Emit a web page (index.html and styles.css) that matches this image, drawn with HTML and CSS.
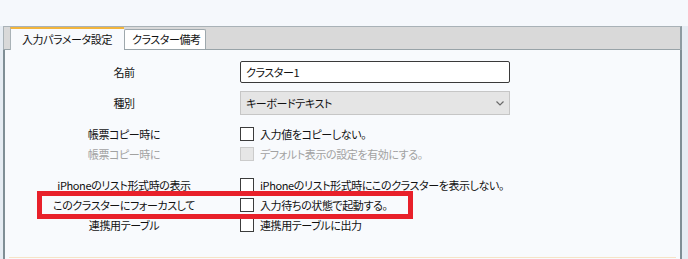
FILE: index.html
```html
<!DOCTYPE html>
<html lang="ja">
<head>
<meta charset="utf-8">
<link rel="stylesheet" href="styles.css">
</head>
<body>
<div class="window">
  <div class="tabstrip">
    <div class="tab tab-active">入力パラメータ設定</div>
    <div class="tab tab-normal">クラスター備考</div>
  </div>
  <div class="panel">
    <div class="form">
      <div class="row row-name">
        <div class="label">名前</div>
        <div class="control"><div class="input">クラスター1</div></div>
      </div>
      <div class="row row-select">
        <div class="label">種別</div>
        <div class="control">
          <div class="select">
            <span>キーボードテキスト</span>
            <svg class="chev" width="8" height="5" viewBox="0 0 8 5"><path d="M0.5 0.5 L4 4 L7.5 0.5" fill="none" stroke="#6a6a6a" stroke-width="1.2"/></svg>
          </div>
        </div>
      </div>
      <div class="row row-check row-first">
        <div class="label">帳票コピー時に</div>
        <div class="control"><span class="cb"></span><span class="cbtext">入力値をコピーしない。</span></div>
      </div>
      <div class="row row-check disabled">
        <div class="label">帳票コピー時に</div>
        <div class="control"><span class="cb"></span><span class="cbtext">デフォルト表示の設定を有効にする。</span></div>
      </div>
      <div class="row row-check row-group">
        <div class="label">iPhoneのリスト形式時の表示</div>
        <div class="control"><span class="cb"></span><span class="cbtext">iPhoneのリスト形式時にこのクラスターを表示しない。</span></div>
      </div>
      <div class="row row-check">
        <div class="label">このクラスターにフォーカスして</div>
        <div class="control"><span class="cb"></span><span class="cbtext">入力待ちの状態で起動する。</span></div>
      </div>
      <div class="row row-check">
        <div class="label">連携用テーブル</div>
        <div class="control"><span class="cb"></span><span class="cbtext">連携用テーブルに出力</span></div>
      </div>
    </div>
    <div class="groupline"></div>
    <div class="highlight"></div>
  </div>
</div>
</body>
</html>
```

FILE: styles.css
```css
* { box-sizing: border-box; }
html, body {
  margin: 0;
  padding: 0;
  width: 688px;
  height: 259px;
  overflow: hidden;
  font-family: "Noto Sans CJK JP", "Noto Sans", sans-serif;
  font-size: 11px;
  letter-spacing: -0.4px;
  font-feature-settings: "palt" 1;
  color: #111;
}
body {
  background: linear-gradient(#f5f8fc, #f5f8fc) no-repeat 0 0 / 688px 26px, #e6ecf3;
}
.window {
  margin-left: 3px;
  padding-top: 26px;
  width: 679px;
}
.tabstrip {
  height: 24px;
  background: #d9d9d9;
  border: 1px solid #a9b2b7;
  border-right: 2px solid #8d9ba1;
  border-bottom: 1px solid #98a3a8;
  display: flex;
  align-items: flex-end;
  padding-left: 6px;
}
.tab {
  display: flex;
  align-items: center;
  line-height: 1;
  white-space: nowrap;
}
.tab-active {
  width: 114px;
  height: 23px;
  margin-bottom: -1px;
  background: #f8fafd;
  border-top: 2px solid #f2b53d;
  border-left: 1px solid #a9b2b7;
  padding-left: 11px;
  padding-bottom: 1px;
}
.tab-normal {
  width: 82px;
  height: 20px;
  background: #ffffff;
  border: 1px solid #9ea8ad;
  border-bottom: none;
  border-radius: 2px 2px 0 0;
  padding-left: 7px;
}
.panel {
  position: relative;
  height: 209px;
  background: #f8fafd;
  border-left: 2px solid #7f8e95;
  border-right: 2px solid #7f8e95;
  padding-top: 11px;
}
.form {
  display: flex;
  flex-direction: column;
}
.row {
  display: grid;
  grid-template-columns: 235px 1fr;
  align-items: center;
}
.label {
  text-align: center;
  padding-left: 3px;
  line-height: 1;
  white-space: nowrap;
}
.control {
  display: flex;
  align-items: center;
}
.row-name { height: 22px; }
.row-select { height: 24px; margin-top: 8px; }
.input {
  width: 270px;
  height: 22px;
  background: #fff;
  border: 1px solid #3a3a3a;
  border-radius: 2px;
  padding-left: 5px;
  display: flex;
  align-items: center;
}
.select {
  width: 270px;
  height: 24px;
  background: #e5e5e5;
  border: 1px solid #c6c6c6;
  padding-left: 5px;
  padding-right: 5px;
  display: flex;
  align-items: center;
  justify-content: space-between;
}
.chev { display: block; }
.row-check { height: 20px; }
.row-first { margin-top: 9px; }
.row-group { margin-top: 11px; }
.cb {
  width: 14px;
  height: 14px;
  background: #fff;
  border: 1px solid #3c3c3c;
  flex: none;
}
.cbtext {
  margin-left: 6px;
  line-height: 1;
  white-space: nowrap;
}
.disabled .label, .disabled .cbtext { color: #a2a2a2; }
.disabled .cb { background: #e6e6e6; border-color: #cbcbcb; }
.groupline {
  margin: 22px 4px 0 4px;
  border-top: 1px solid #f6e3c6;
}
.highlight {
  position: absolute;
  left: 32px;
  top: 141px;
  width: 376px;
  height: 28px;
  border: 5px solid #e8202a;
}
```
